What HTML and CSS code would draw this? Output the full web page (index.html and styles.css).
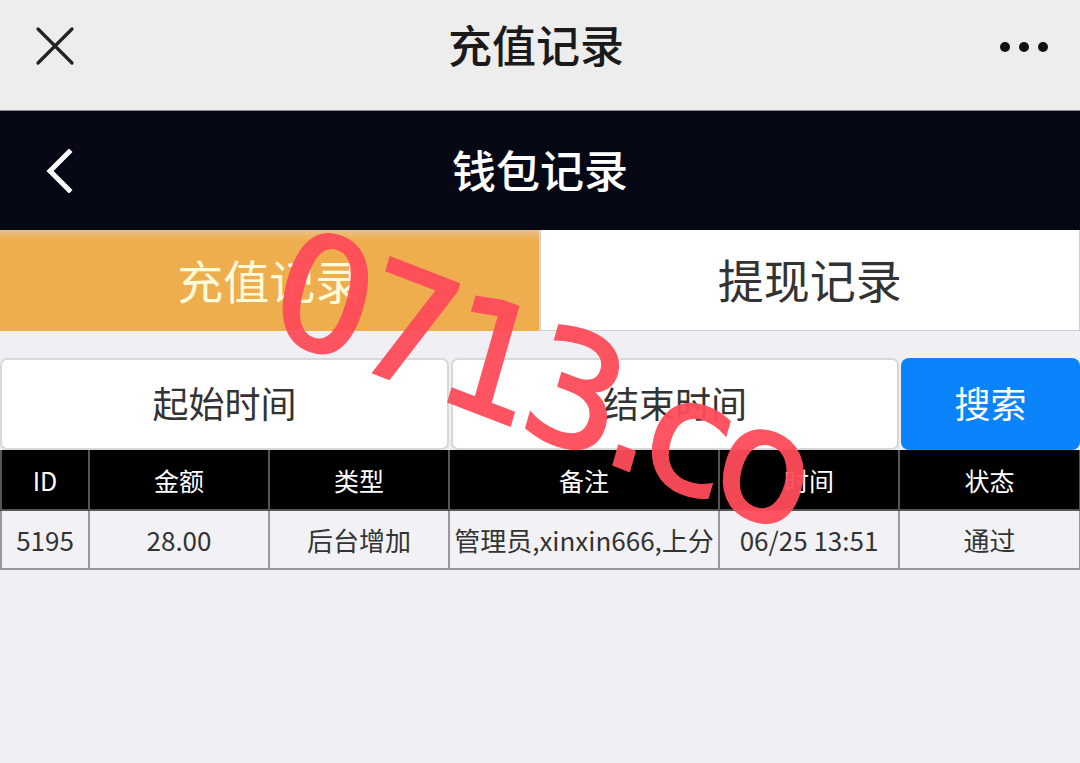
FILE: index.html
```html
<!DOCTYPE html>
<html lang="zh">
<head>
<meta charset="utf-8">
<title>充值记录</title>
<link rel="stylesheet" href="styles.css">
</head>
<body>
<div class="page">
  <header class="topbar">
    <div class="topbar-left"><svg class="close-icon" width="40" height="40" viewBox="0 0 40 40"><path d="M3 3 L37 37 M37 3 L3 37" stroke="#222" stroke-width="3.2" fill="none" stroke-linecap="round"/></svg></div>
    <div class="topbar-title">充值记录</div>
    <div class="topbar-right"><svg class="more-icon" width="56" height="14" viewBox="0 0 56 14"><circle cx="8" cy="7" r="5" fill="#111"/><circle cx="27" cy="7" r="5" fill="#111"/><circle cx="46" cy="7" r="5" fill="#111"/></svg></div>
  </header>
  <nav class="navbar">
    <svg class="back-icon" width="30" height="44" viewBox="0 0 30 44"><path d="M24 3 L5 22 L24 41" stroke="#fff" stroke-width="5" fill="none" stroke-linecap="square"/></svg>
    <div class="navbar-title">钱包记录</div>
  </nav>
  <div class="tabs">
    <div class="tab tab-active">充值记录</div>
    <div class="tab">提现记录</div>
  </div>
  <div class="search">
    <div class="field field-start">起始时间</div>
    <div class="field field-end">结束时间</div>
    <div class="btn-search">搜索</div>
  </div>
  <table class="records">
    <colgroup>
      <col class="c-id"><col class="c-amt"><col class="c-type"><col class="c-note"><col class="c-time"><col class="c-state">
    </colgroup>
    <thead>
      <tr><th>ID</th><th>金额</th><th>类型</th><th>备注</th><th>时间</th><th>状态</th></tr>
    </thead>
    <tbody>
      <tr><td>5195</td><td>28.00</td><td>后台增加</td><td class="note">管理员,xinxin666,上分</td><td>06/25 13:51</td><td>通过</td></tr>
    </tbody>
  </table>
  <div class="watermark">0713.co</div>
</div>
</body>
</html>
```
FILE: styles.css
```css
* { box-sizing: border-box; }
html, body { margin: 0; padding: 0; }
body {
  background: #efeff4;
  font-family: "Noto Sans CJK SC", "Noto Sans", sans-serif;
  width: 1080px;
  height: 763px;
  overflow: hidden;
}
.page { position: relative; width: 1080px; height: 763px; }

.topbar {
  height: 111px;
  background: #ededed;
  border-bottom: 1px solid #8c8c8c;
  display: grid;
  grid-template-columns: 1fr auto 1fr;
  align-items: center;
  padding: 0 27px 22px 35px;
}
.topbar-left { display: flex; padding-top: 4px; }
.topbar-right { display: flex; justify-content: flex-end; padding-top: 5px; }
.close-icon, .more-icon { display: block; }
.topbar-title {
  font-size: 44px;
  color: #1a1a1a;
  font-weight: 500;
  line-height: 1;
  margin-right: 16px;
}

.navbar {
  height: 119px;
  background: #060915;
  display: flex;
  align-items: center;
  position: relative;
}
.back-icon { display: block; margin-left: 45px; margin-top: 0; }
.navbar-title {
  position: absolute;
  left: 0; right: 0;
  top: 36px;
  text-align: center;
  color: #fff;
  font-size: 44px;
  font-weight: 500;
  line-height: 1;
}

.tabs {
  display: flex;
  height: 101px;
}
.tab {
  flex: 1;
  display: flex;
  align-items: center;
  justify-content: center;
  font-size: 46px;
  color: #333;
  background: #fff;
  border: 1px solid #cfcfcf;
  border-top: none;
  padding-bottom: 4px;
}
.tab-active {
  background: linear-gradient(#e9c18a 0, #eeae4e 10px, #eeae4e 100%);
  color: #fffbd8;
  border: none;
  border-right: 1px solid #d9d9d9;
}

.search {
  display: flex;
  gap: 2px;
  margin-top: 27px;
  height: 92px;
}
.field {
  display: flex;
  align-items: center;
  justify-content: center;
  background: #fff;
  border: 2px solid #d8d8d8;
  border-radius: 7px;
  font-size: 36px;
  color: #333;
  padding-bottom: 4px;
}
.field-start { width: 449px; }
.field-end { width: 448px; }
.btn-search {
  flex: 1;
  display: flex;
  align-items: center;
  justify-content: center;
  background: #0b84fb;
  color: #fff;
  border-radius: 8px;
  font-size: 36px;
  padding-bottom: 4px;
}

.records {
  border-collapse: collapse;
  table-layout: fixed;
  width: 1079px;
}
.c-id { width: 88px; }
.c-amt { width: 180px; }
.c-type { width: 180px; }
.c-note { width: 270px; }
.c-time { width: 180px; }
.c-state { width: 181px; }
.records th, .records td {
  border: 2px solid #8e8e8e;
  text-align: center;
  font-size: 25px;
  font-weight: 400;
  padding: 0;
  white-space: nowrap;
  overflow: hidden;
}
.records th {
  background: #000;
  color: #fff;
  height: 60px;
  border-top: none;
  border-color: #555;
}
.records td {
  background: #f2f2f6;
  color: #333;
  height: 59px;
  border-color: #999;
  font-size: 26px;
}
.records td.note { font-size: 26px; letter-spacing: 0; }

.watermark {
  position: absolute;
  left: 300px;
  top: 204px;
  font-family: "DejaVu Sans", sans-serif;
  font-size: 155px;
  color: #ff4b59;
  -webkit-text-stroke: 3px #ff4b59;
  line-height: 1;
  transform-origin: 0 0;
  transform: rotate(21deg) skewX(5deg);
  letter-spacing: -9px;
  opacity: 0.95;
  white-space: nowrap;
  pointer-events: none;
}
```
